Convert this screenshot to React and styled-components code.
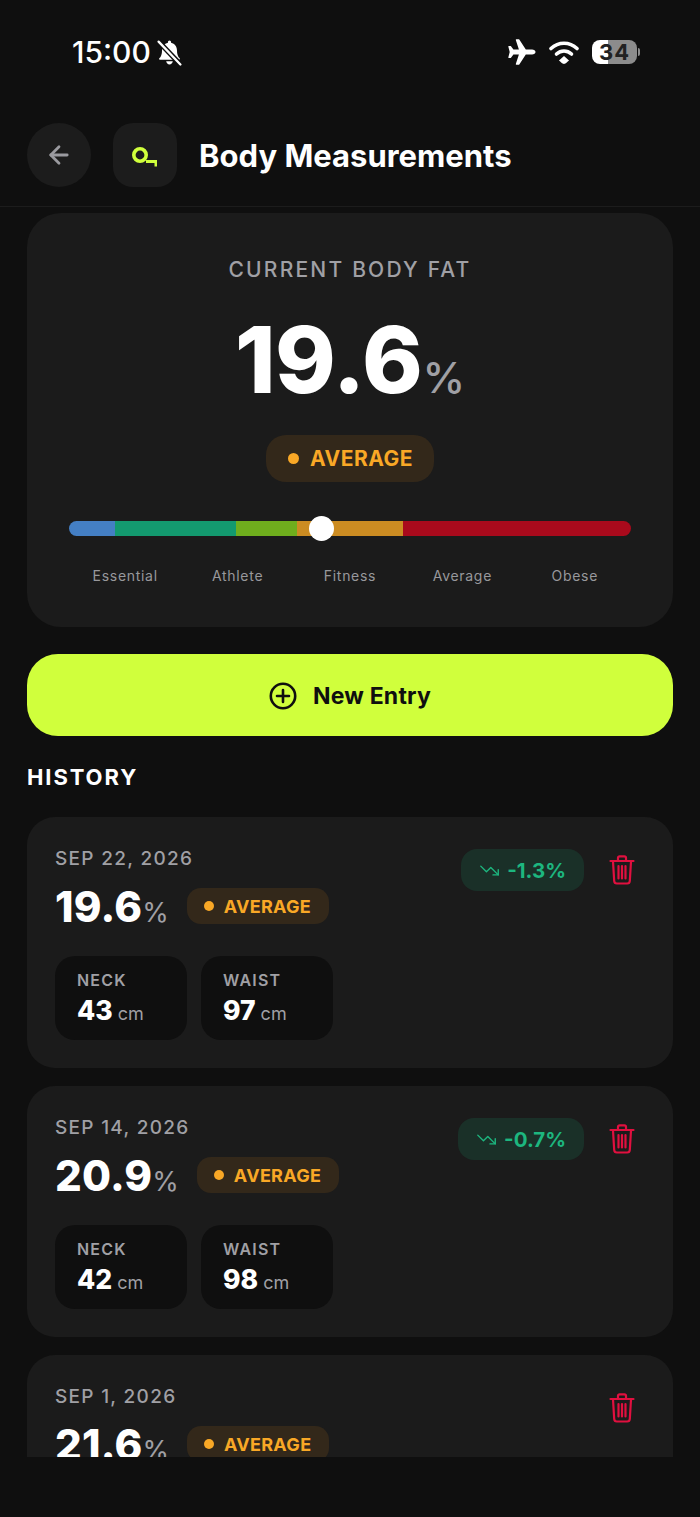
import React from 'react';
import styled, { createGlobalStyle } from 'styled-components';
import { ArrowLeft, TrendingDown } from 'lucide-react';

const Global = createGlobalStyle`
  html, body { margin: 0; padding: 0; background: #0f0f0f; }
  * { box-sizing: border-box; }
  body { font-family: Inter, "Noto Sans", sans-serif; }
`;

const Screen = styled.div`
  width: 700px; height: 1517px; background: #0f0f0f; color: #fff;
  display: flex; flex-direction: column; overflow: hidden;
`;
const StatusBar = styled.div`
  height: 100px; padding: 32px 60px 0 72px;
  display: flex; justify-content: space-between; align-items: flex-start;
`;
const StatusLeft = styled.div`display: flex; align-items: center; gap: 5px; height: 40px;`;
const Time = styled.span`font-size: 30px; font-weight: 500; line-height: 40px; letter-spacing: 0;`;
const StatusRight = styled.div`display: flex; align-items: center; gap: 13px; height: 40px;`;
const Battery = styled.div`
  position: relative; width: 45px; height: 24px; border-radius: 8px; overflow: hidden;
  background: linear-gradient(90deg, #fff 0 35%, #8c8c8c 35% 100%);
  display: flex; align-items: center; justify-content: center;
  font-size: 22px; font-weight: 700; color: #222; letter-spacing: 1px;
`;
const BatteryWrap = styled.div`display: flex; align-items: center; gap: 1px;`;
const BatteryTip = styled.div`width: 2px; height: 8px; border-radius: 0 2px 2px 0; background: #8c8c8c;`;

const Header = styled.header`
  height: 107px; padding: 23px 27px 19px; flex: none;
  display: flex; align-items: center; border-bottom: 1px solid #1c1c1c;
`;
const BackButton = styled.button`
  width: 64px; height: 64px; border-radius: 50%; border: 0; background: #1c1c1c; color: #9a9a9f;
  display: flex; align-items: center; justify-content: center; padding: 0;
`;
const IconTile = styled.div`
  width: 64px; height: 64px; border-radius: 20px; background: #1c1c1c; margin-left: 22px;
  display: flex; align-items: center; justify-content: center;
`;
const Title = styled.h1`margin: 0 0 0 22px; font-size: 31px; font-weight: 700; letter-spacing: 0; color: #fff;`;

const Scroll = styled.main`
  height: 1250px; flex: none; overflow: hidden; padding: 6px 27px 0;
  display: flex; flex-direction: column;
`;
const Hero = styled.section`
  flex: none; height: 414px; border-radius: 34px; background: #1b1b1b; padding: 45px 42px 0;
  display: flex; flex-direction: column; align-items: center;
`;
const HeroLabel = styled.div`font-size: 21px; font-weight: 500; letter-spacing: 2.2px; color: #a0a0a5; line-height: 24px;`;
const HeroValueRow = styled.div`display: flex; align-items: baseline; margin-top: 25px; height: 106px; line-height: 106px;`;
const HeroValue = styled.span`font-size: 92px; font-weight: 850; letter-spacing: -0.4px;`;
const HeroUnit = styled.span`font-size: 43px; font-weight: 500; color: #a0a0a5; margin-left: 0;`;

const Pill = styled.div`
  display: inline-flex; align-items: center; flex: none; background: #33281a; color: #f9a826; font-weight: 700;
  height: ${p => (p.$large ? 47 : 36)}px;
  padding: ${p => (p.$large ? '0 21px 0 22px' : '0 18px 0 17px')};
  border-radius: ${p => (p.$large ? 20 : 14)}px;
  gap: ${p => (p.$large ? 11 : 10)}px;
  font-size: ${p => (p.$large ? 21 : 18)}px;
  letter-spacing: ${p => (p.$large ? 0.5 : 0.3)}px;
`;
const Dot = styled.span`
  border-radius: 50%; background: #f9a826; flex: none;
  width: ${p => (p.$large ? 11 : 10)}px; height: ${p => (p.$large ? 11 : 10)}px;
`;
const HeroPillWrap = styled.div`margin-top: 22px;`;

const ScaleWrap = styled.div`position: relative; width: 100%; margin-top: 39px; height: 15px;`;
const Scale = styled.div`display: flex; width: 100%; height: 15px; border-radius: 8px; overflow: hidden;`;
const Segment = styled.div`height: 100%; background: ${p => p.$c};`;
const Knob = styled.div`
  position: absolute; width: 25px; height: 25px; top: -5px; border-radius: 50%; background: #fff;
`;
const ScaleLabels = styled.div`display: grid; grid-template-columns: repeat(5, 1fr); width: 100%; margin-top: 31px;`;
const ScaleLabel = styled.div`text-align: center; font-size: 14px; letter-spacing: 0.7px; color: #98989c; line-height: 18px;`;

const NewEntry = styled.button`
  flex: none; margin-top: 27px; height: 82px; border: 0; border-radius: 31px; background: #d0ff3c; color: #0f0f0f;
  display: flex; align-items: center; justify-content: center; gap: 16px;
  font-family: inherit; font-size: 23px; font-weight: 700; letter-spacing: 0.2px; line-height: 28px; padding: 1px 0 0;
`;
const SectionTitle = styled.h2`
  margin: 28px 0 26px; font-size: 22px; line-height: 27px; font-weight: 700; letter-spacing: 1.9px; color: #fff;
`;
const Card = styled.article`
  flex: none; height: 251px; border-radius: 28px; background: #1b1b1b; padding: 30px 29px 0 28px; margin-bottom: 18px;
`;
const CardTop = styled.div`display: flex; justify-content: space-between; align-items: flex-start;`;
const CardMain = styled.div`display: flex; flex-direction: column;`;
const DateText = styled.div`font-size: 19px; font-weight: 500; letter-spacing: 1.3px; line-height: 24px; color: #a0a0a5;`;
const ValueRow = styled.div`display: flex; align-items: center; margin-top: 11px; height: 48px;`;
const ValueGroup = styled.div`display: flex; align-items: baseline;`;
const Value = styled.span`font-size: 42px; font-weight: 850; letter-spacing: 0.2px;`;
const Unit = styled.span`font-size: 27px; font-weight: 400; color: #a0a0a5; margin-left: 0;`;
const ValuePill = styled.div`margin-left: 18px; display: flex;`;
const CardSide = styled.div`display: flex; align-items: center; gap: 16px; margin-top: 1px;`;
const Delta = styled.div`
  height: 42px; padding: 0 18px; border-radius: 16px; background: #1a3028; color: #1db67f;
  display: flex; align-items: center; gap: 7px; font-size: 20.5px; font-weight: 700; letter-spacing: 0;
`;
const TrashButton = styled.button`
  width: 44px; height: 44px; border: 0; background: none; color: #e0103f;
  display: flex; align-items: center; justify-content: flex-start; padding: 0 0 0 9px;
`;
const Metrics = styled.div`display: flex; gap: 14px; margin-top: 26px;`;
const Metric = styled.div`
  width: 132px; height: 84px; border-radius: 20px; background: #0f0f0f; padding: 13px 22px 0;
`;
const MetricLabel = styled.div`font-size: 16px; font-weight: 600; letter-spacing: 1.2px; color: #a0a0a5; line-height: 22px;`;
const MetricValue = styled.div`display: flex; align-items: baseline; gap: 5px; line-height: 34px; margin-top: 2px;`;
const MetricNum = styled.span`font-size: 26.5px; font-weight: 800;`;
const MetricUnit = styled.span`font-size: 18px; color: #a0a0a5;`;

const BellOff = () => (
  <svg width="27" height="27" viewBox="0 0 26 26">
    <path fill="#fff" d="M13 1.500c-.9 0-1.500.7-1.500 1.500v.6C7.900 4.400 5.800 7.500 5.800 11c0 3.500-.8 5.800-2.600 7.600-.5.500-.2 1.400.6 1.400h18.400c.8 0 1.100-.9.6-1.400-1.800-1.800-2.600-4.100-2.600-7.600 0-3.500-2.100-6.600-5.700-7.400V3c0-.8-.6-1.500-1.500-1.500z" />
    <path fill="#fff" d="M9.800 21.500h6.400c-.3 1.700-1.600 3-3.200 3s-2.900-1.300-3.200-3z" />
    <path stroke="#0f0f0f" strokeWidth="5" d="M2 2l22 23" />
    <path stroke="#fff" strokeWidth="2.200" strokeLinecap="round" d="M2.500 2.500l21 22" />
  </svg>
);
const Airplane = () => (
  <svg width="28" height="26" viewBox="0 0 28 26">
    <path fill="#fff" d="M27.500 13c0-1.400-1.500-2.400-3.500-2.400h-6.200L11.300.6C11.100.3 10.800.2 10.500.2H8.300c-.4 0-.6.300-.5.700l3.100 9.700H5.400L3 7.300c-.2-.2-.4-.3-.6-.3H.8c-.4 0-.6.300-.5.600L1.700 13 .3 18.400c-.1.300.1.600.5.600h1.600c.2 0 .4-.1.600-.3l2.400-3.300h5.500l-3.100 9.700c-.1.400.1.700.5.700h2.200c.3 0 .6-.1.800-.4l6.500-10h6.200c2 0 3.500-1 3.500-2.400z" />
  </svg>
);
const Wifi = () => (
  <svg width="30" height="24" viewBox="0 0 30 24" fill="none">
    <path fill="#fff" d="M15 16l-5 4.500c-.3-.3 3.500 3.500 5 3.500s5.300-3.800 5-3.500z" />
    <path stroke="#fff" strokeWidth="3.600" strokeLinecap="round" d="M2 8.500C9.500 1.500 20.500 1.500 28 8.500" />
    <path stroke="#fff" strokeWidth="3.600" strokeLinecap="round" d="M7.500 14C12 10 18 10 22.500 14" />
  </svg>
);
const Tape = () => (
  <svg width="28" height="24" viewBox="0 0 28 24" fill="none">
    <circle cx="9" cy="12" r="6.200" stroke="#d0ff3c" strokeWidth="3.600" />
    <path fill="#d0ff3c" d="M15 17h11v6.500h-2.500V20H15z" />
  </svg>
);
const Trash = () => (
  <svg width="26" height="30" viewBox="0 0 26 30" fill="none" stroke="currentColor" strokeWidth="2.200" strokeLinecap="round" strokeLinejoin="round">
    <path d="M1.500 6h23" />
    <path d="M9 6V3c0-.9.7-1.600 1.600-1.600h4.800c.9 0 1.600.7 1.600 1.600v3" />
    <path d="M4 6.500l1.200 19.500c.1 1.500 1.200 2.500 2.600 2.500h10.400c1.400 0 2.500-1 2.600-2.500L22 6.500" />
    <path d="M9.500 11v12.500M13 11v12.500M16.500 11v12.500" />
  </svg>
);
const PlusCircle = () => (
  <svg width="28" height="28" viewBox="0 0 28 28" fill="none" stroke="#0f0f0f" strokeWidth="2.600" strokeLinecap="round">
    <circle cx="14" cy="14" r="12.200" />
    <path d="M14 8v12M8 14h12" />
  </svg>
);

const segments = [
  ['#447fc4', 46], ['#139a6f', 121], ['#6fae1d', 61], ['#cc8c22', 106], ['#a90a1c', 228],
];
const scaleNames = ['Essential', 'Athlete', 'Fitness', 'Average', 'Obese'];

const entries = [
  { date: 'SEP 22, 2026', value: '19.6', delta: '-1.3%', neck: 43, waist: 97 },
  { date: 'SEP 14, 2026', value: '20.9', delta: '-0.7%', neck: 42, waist: 98 },
  { date: 'SEP 1, 2026', value: '21.6' },
];

const Entry = ({ e }) => (
  <Card>
    <CardTop>
      <CardMain>
        <DateText>{e.date}</DateText>
        <ValueRow>
          <ValueGroup>
            <Value>{e.value}</Value>
            <Unit>%</Unit>
          </ValueGroup>
          <ValuePill>
            <Pill><Dot />AVERAGE</Pill>
          </ValuePill>
        </ValueRow>
      </CardMain>
      <CardSide>
        {e.delta && (
          <Delta>
            <TrendingDown size={21} strokeWidth={1.6} />
            {e.delta}
          </Delta>
        )}
        <TrashButton aria-label="Delete"><Trash /></TrashButton>
      </CardSide>
    </CardTop>
    {e.neck && (
      <Metrics>
        <Metric>
          <MetricLabel>NECK</MetricLabel>
          <MetricValue><MetricNum>{e.neck}</MetricNum><MetricUnit>cm</MetricUnit></MetricValue>
        </Metric>
        <Metric>
          <MetricLabel>WAIST</MetricLabel>
          <MetricValue><MetricNum>{e.waist}</MetricNum><MetricUnit>cm</MetricUnit></MetricValue>
        </Metric>
      </Metrics>
    )}
  </Card>
);

export default function App() {
  return (
    <Screen>
      <Global />
      <StatusBar>
        <StatusLeft><Time>15:00</Time><BellOff /></StatusLeft>
        <StatusRight>
          <Airplane />
          <Wifi />
          <BatteryWrap><Battery>34</Battery><BatteryTip /></BatteryWrap>
        </StatusRight>
      </StatusBar>
      <Header>
        <BackButton aria-label="Back"><ArrowLeft size={28} strokeWidth={2.4} /></BackButton>
        <IconTile><Tape /></IconTile>
        <Title>Body Measurements</Title>
      </Header>
      <Scroll>
        <Hero>
          <HeroLabel>CURRENT BODY FAT</HeroLabel>
          <HeroValueRow><HeroValue>19.6</HeroValue><HeroUnit>%</HeroUnit></HeroValueRow>
          <HeroPillWrap><Pill $large><Dot $large />AVERAGE</Pill></HeroPillWrap>
          <ScaleWrap>
            <Scale>
              {segments.map(([c, w]) => <Segment key={c} $c={c} style={{ width: w }} />)}
            </Scale>
            <Knob style={{ left: 239.5 }} />
          </ScaleWrap>
          <ScaleLabels>
            {scaleNames.map(n => <ScaleLabel key={n}>{n}</ScaleLabel>)}
          </ScaleLabels>
        </Hero>
        <NewEntry><PlusCircle />New Entry</NewEntry>
        <SectionTitle>HISTORY</SectionTitle>
        {entries.map(e => <Entry key={e.date} e={e} />)}
      </Scroll>
    </Screen>
  );
}
